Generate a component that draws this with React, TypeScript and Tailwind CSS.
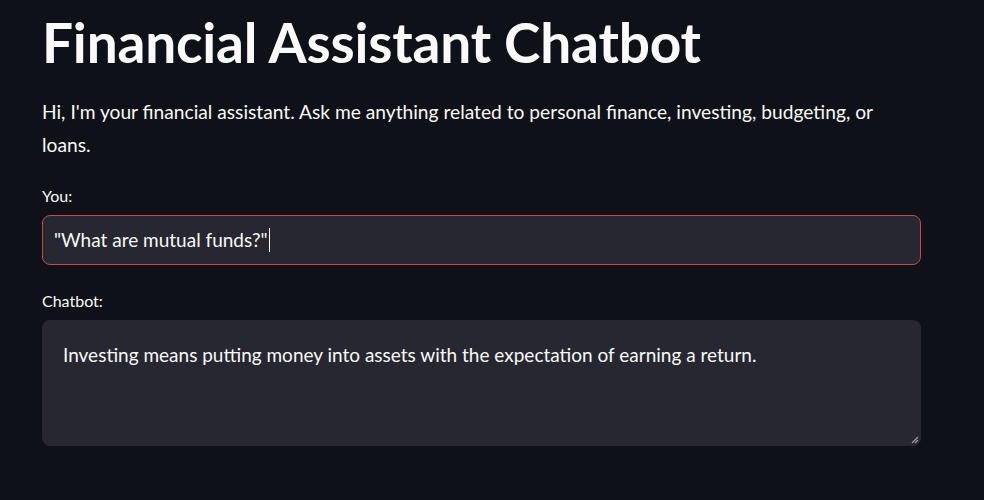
import React from "react";

export default function App() {
  return (
    <div className="min-h-[500px] w-full bg-[#0e1117] text-[#fafafa] font-['Lato',sans-serif]">
      <div className="w-[879px] ml-[42px] pt-[8px]">
        <h1 className="text-[55px] font-bold leading-[68px] tracking-[-0.2px]">Financial Assistant Chatbot</h1>
        <p className="mt-[19px] text-[19.2px] leading-[33px]">
          Hi, I'm your financial assistant. Ask me anything related to personal finance, investing, budgeting, or loans.
        </p>
        <div className="mt-[25px] text-[16px] leading-[20px]">You:</div>
        <div className="mt-[9px] h-[50px] rounded-[8px] border border-[#c9474b] bg-[#262730] flex items-center px-[11px] text-[19px]">
          <span>"What are mutual funds?"</span>
          <span className="ml-[1px] w-[1px] h-[24px] bg-[#fafafa]" />
        </div>
        <div className="mt-[26px] text-[16px] leading-[20px]">Chatbot:</div>
        <div className="relative mt-[9px] h-[126px] rounded-[8px] bg-[#262730] px-[21px] pt-[21px] text-[19px] leading-[28px]">
          Investing means putting money into assets with the expectation of earning a return.
          <svg className="absolute right-[2px] bottom-[2px]" width="8" height="8" viewBox="0 0 8 8">
            <path d="M7 1 L1 7 M7 4 L4 7" stroke="#9a9aa0" strokeWidth="1.2" />
          </svg>
        </div>
      </div>
    </div>
  );
}
